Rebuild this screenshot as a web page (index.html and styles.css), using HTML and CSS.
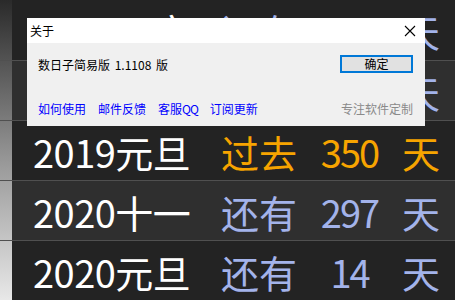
FILE: index.html
```html
<!DOCTYPE html>
<html lang="zh-CN">
<head>
    <meta charset="UTF-8">
    <title>数日子简易版</title>
    <link rel="stylesheet" href="styles.css">
</head>
<body>
<div class="board">
    <div class="row">
        <div class="cells blue">
            <span class="name">2020元宵</span><span class="state">还有</span><span class="num">52</span><span class="unit">天</span>
        </div>
    </div>
    <div class="row">
        <div class="cells blue light">
            <span class="name">2020清明</span><span class="state">还有</span><span class="num">92</span><span class="unit">天</span>
        </div>
    </div>
    <div class="row">
        <div class="cells orange">
            <span class="name">2019元旦</span><span class="state">过去</span><span class="num">350</span><span class="unit">天</span>
        </div>
    </div>
    <div class="row">
        <div class="cells blue light">
            <span class="name">2020十一</span><span class="state">还有</span><span class="num">297</span><span class="unit">天</span>
        </div>
    </div>
    <div class="row">
        <div class="cells blue">
            <span class="name">2020元旦</span><span class="state">还有</span><span class="num">14</span><span class="unit">天</span>
        </div>
    </div>
</div>

<!-- 关于 对话框 -->
<div class="dialog">
    <div class="dialog-title">
        <span>关于</span>
        <svg class="close" width="12" height="12" viewBox="0 0 12 12"><path d="M1 1L11 11M11 1L1 11" stroke="#000" stroke-width="1.1" fill="none"/></svg>
    </div>
    <div class="dialog-body">
        <div class="dialog-top">
            <span class="ver">数日子简易版 1.1108 版</span>
            <button class="ok">确定</button>
        </div>
        <div class="dialog-links">
            <a href="#">如何使用</a>
            <a href="#">邮件反馈</a>
            <a href="#">客服<span class="qq">QQ</span></a>
            <a href="#">订阅更新</a>
            <span class="custom">专注软件定制</span>
        </div>
    </div>
</div>
</body>
</html>
```

FILE: styles.css
```css
*{
    margin: 0;
    padding: 0;
    box-sizing: border-box;
}
body{
    width: 455px;
    height: 300px;
    overflow: hidden;
    background: #232323;
    font-family: "Noto Sans CJK SC", "Noto Sans", sans-serif;
    position: relative;
}
.board{
    height: 300px;
    background: linear-gradient(to bottom, #2a2a2a, #9a9a9a 55%, #e8e8e8) no-repeat left top / 12px 100%;
}
.row{
    height: 60px;
    display: flex;
}
.row + .row{
    border-top: 1px solid #505050;
}
.cells{
    flex: 1;
    margin-left: 12px;
    background: #232323;
    display: grid;
    grid-template-columns: 188px 76px 105px 1fr;
    align-items: center;
    padding-left: 21px;
    padding-top: 2px;
    font-size: 38px;
    line-height: 1;
}
.cells.light{
    background: #2f2f2f;
}
.name{
    color: #fff;
    letter-spacing: -0.5px;
}
.num{
    text-align: center;
    letter-spacing: -2px;
}
.orange .state, .orange .num, .orange .unit{
    color: #f7a400;
}
.blue .state, .blue .num, .blue .unit{
    color: #a3b3ea;
}

.dialog{
    position: absolute;
    left: 27px;
    top: 18px;
    width: 398px;
    height: 108px;
    background: #f0f0f0;
    font-size: 12px;
}
.dialog-title{
    height: 25px;
    background: #fff;
    display: flex;
    align-items: center;
    justify-content: space-between;
    padding: 0 9px 0 3px;
    color: #000;
}
.dialog-body{
    height: 83px;
    display: flex;
    flex-direction: column;
    justify-content: space-between;
    padding: 12px 12px 9px 11px;
}
.dialog-top{
    display: flex;
    align-items: center;
    justify-content: space-between;
    height: 18px;
}
.ver{
    color: #000;
    word-spacing: 2px;
}
.ok{
    width: 73px;
    height: 18px;
    border: 2px solid #0078d7;
    background: #e1e1e1;
    font-family: inherit;
    font-size: 12px;
    line-height: 14px;
    color: #000;
}
.dialog-links{
    display: flex;
    gap: 12px;
    line-height: 16px;
}
.dialog-links a{
    color: #0000ff;
    text-decoration: none;
}
.qq{
    letter-spacing: -1px;
}
.custom{
    margin-left: auto;
    color: #8a8a8a;
}
```
